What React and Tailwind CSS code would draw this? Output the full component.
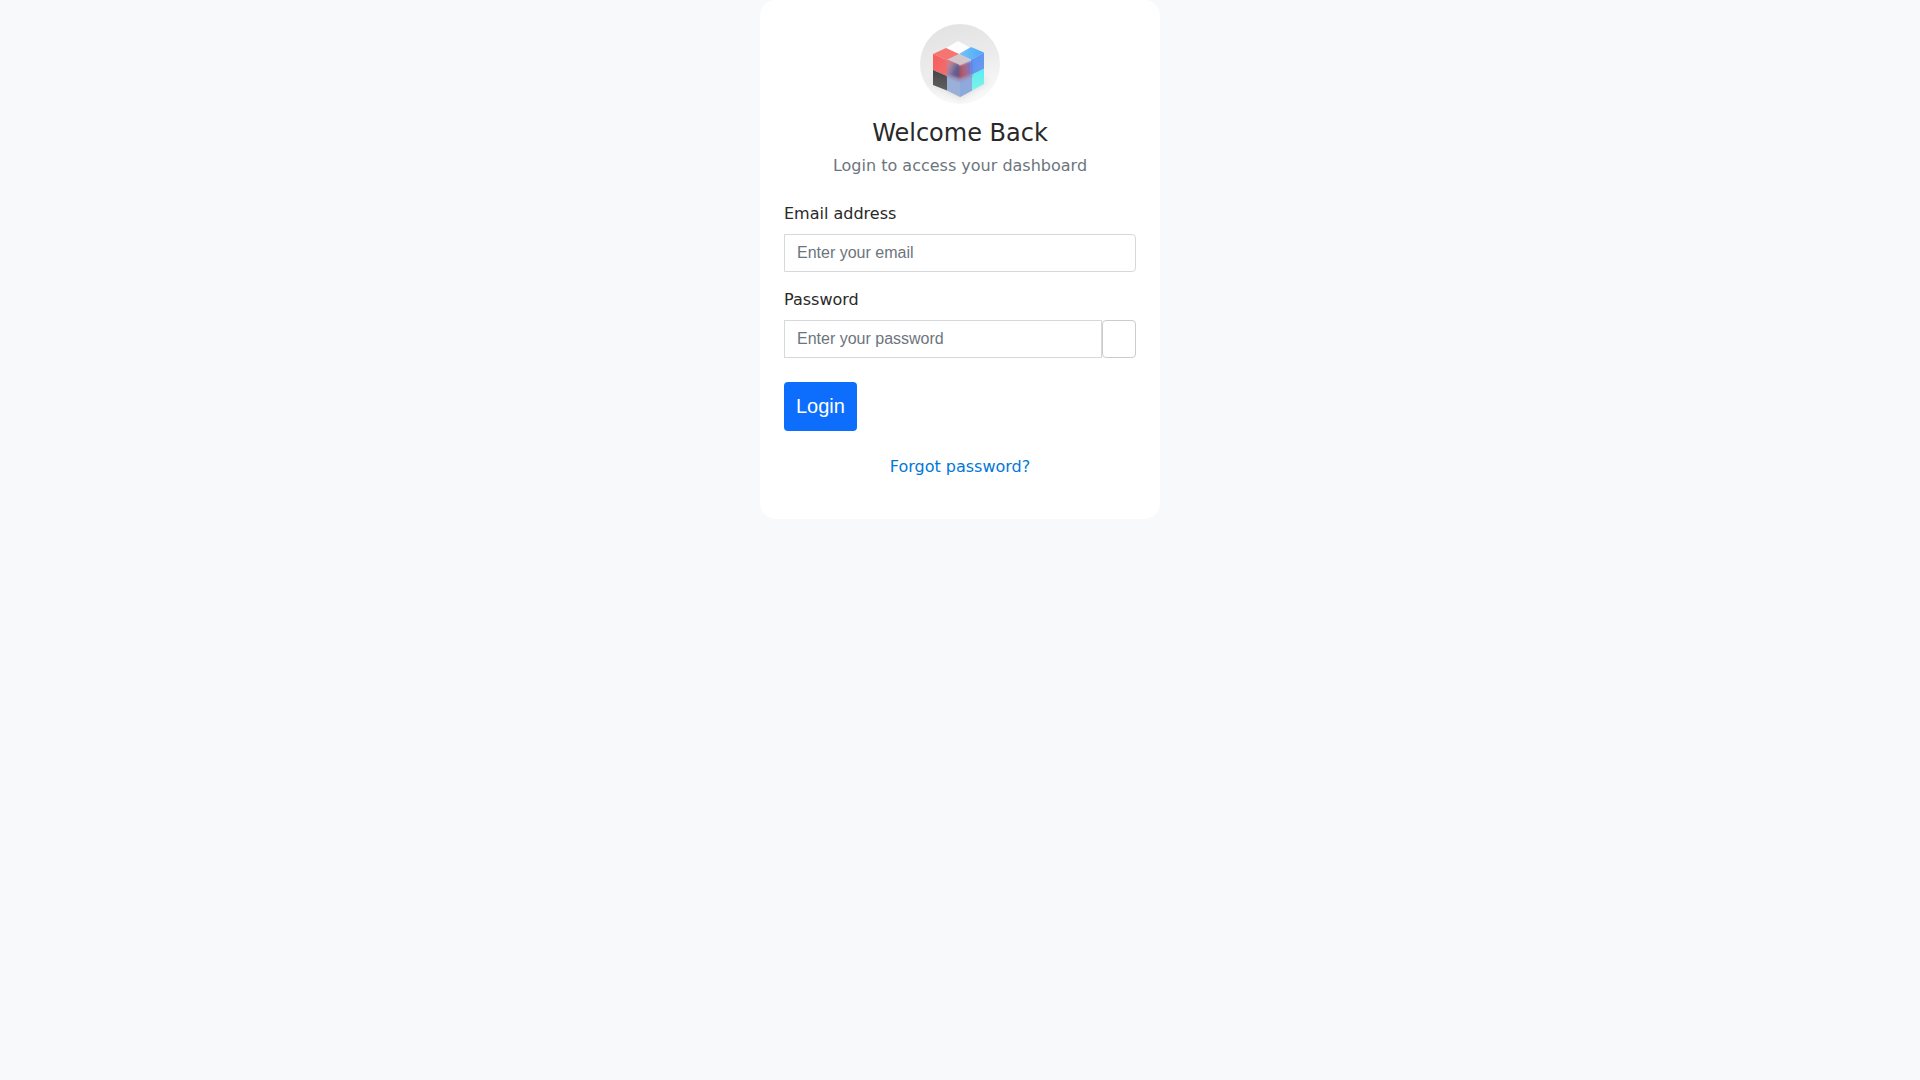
const Logo = () => (
  <svg viewBox="0 0 80 80" role="img" aria-label="Logo" className="size-20 rounded-full">
    <defs>
      <linearGradient id="backdrop" x1="0" y1="0" x2="0.3" y2="1">
        <stop offset="0" stopColor="#e1e1e1" />
        <stop offset="0.6" stopColor="#ececec" />
        <stop offset="1" stopColor="#f8f8f8" />
      </linearGradient>
      <linearGradient id="redFace" x1="0" y1="0" x2="1" y2="1">
        <stop offset="0" stopColor="#f95c5c" />
        <stop offset="1" stopColor="#f06e70" />
      </linearGradient>
      <linearGradient id="blueTop" x1="0" y1="0" x2="1" y2="0">
        <stop offset="0" stopColor="#72c4f8" />
        <stop offset="1" stopColor="#4da8fb" />
      </linearGradient>
      <linearGradient id="blueFace" x1="0" y1="0" x2="1" y2="1">
        <stop offset="0" stopColor="#5594f5" />
        <stop offset="1" stopColor="#7099ec" />
      </linearGradient>
      <linearGradient id="darkFace" x1="0" y1="0" x2="0" y2="1">
        <stop offset="0" stopColor="#464646" />
        <stop offset="1" stopColor="#606060" />
      </linearGradient>
      <linearGradient id="cyanFace" x1="0" y1="0" x2="0" y2="1">
        <stop offset="0" stopColor="#5eeaf0" />
        <stop offset="1" stopColor="#7af5ea" />
      </linearGradient>
      <linearGradient id="glassLeft" x1="0" y1="0" x2="1" y2="0.7">
        <stop offset="0" stopColor="#ea7d84" />
        <stop offset="0.35" stopColor="#a4829f" />
        <stop offset="0.7" stopColor="#5d5f94" />
        <stop offset="1" stopColor="#7d4f74" />
      </linearGradient>
      <linearGradient id="glassRight" x1="0" y1="0.6" x2="1" y2="0.4">
        <stop offset="0" stopColor="#b2525e" />
        <stop offset="0.5" stopColor="#a5698c" />
        <stop offset="1" stopColor="#5f7ddd" />
      </linearGradient>
      <filter id="shade" x="-30%" y="-30%" width="160%" height="160%">
        <feGaussianBlur stdDeviation="3" />
      </filter>
      <filter id="soft" x="-10%" y="-10%" width="120%" height="120%">
        <feGaussianBlur stdDeviation="0.3" />
      </filter>
      <filter id="frost" x="-10%" y="-10%" width="120%" height="120%">
        <feGaussianBlur stdDeviation="0.8" />
      </filter>
    </defs>
    <rect width="80" height="80" fill="url(#backdrop)" />
    <path d="M10 58 40 48 68 58 40 75Z" fill="#c9c9c9" opacity="0.6" filter="url(#shade)" />
    <g filter="url(#soft)">
      {/* back cube */}
      <path d="M26 24 38 17 51 24 39 31Z" fill="#fdfdfd" />
      {/* red cube */}
      <path d="M13 30 26 24 39 30 27 36Z" fill="#f57471" />
      <path d="M13 30 27 36V52L13 46Z" fill="url(#redFace)" />
      <path d="M27 36 39 30V48L27 52Z" fill="#ec7075" />
      {/* blue cube */}
      <path d="M39 30 51 23 64 28.500 51 36Z" fill="url(#blueTop)" />
      <path d="M51 36 64 28.500V46L51 52Z" fill="url(#blueFace)" />
      {/* bottom row */}
      <path d="M13 46 27 52V66.500L13 61Z" fill="url(#darkFace)" />
      <path d="M51 51 64 44.500V60L51 67Z" fill="url(#cyanFace)" />
      <path d="M27 50 40 56 52 50V66.500L40 73 27 66.500Z" fill="#9bb0d8" />
      <path d="M40 56 52 50V66.500L40 73Z" fill="#8ea9dc" />
    </g>
    {/* frosted cube in front */}
    <g filter="url(#frost)">
      <path d="M27 36 40 41V56.500L27 52Z" fill="url(#glassLeft)" />
      <path d="M40 41 52 36V52L40 56.500Z" fill="url(#glassRight)" />
      <path d="M27 50 40 54.500 52 50V53L40 58 27 53Z" fill="#9a93bd" />
    </g>
    <path d="M27.500 35.500 39 30 51.500 35.500 40 41Z" fill="#d3c6cb" filter="url(#soft)" />
  </svg>
);

const inputStyles =
  'block h-[38px] w-full min-w-0 flex-1 border border-[#d6d8da] bg-white px-3 font-["Liberation_Sans",sans-serif] text-base text-[#292929] placeholder:text-[#6c757d]';

const Field = ({ id, label, children }) => (
  <div>
    <label htmlFor={id} className="mb-2 block">{label}</label>
    <div className="flex">{children}</div>
  </div>
);

export default function App() {
  return (
    <div className='min-h-screen bg-[#f8f9fb] font-["DejaVu_Sans",sans-serif] text-base text-[#292929]'>
      <main className="mx-auto w-full max-w-[400px] rounded-2xl bg-white px-6 pt-6 pb-10">
        <header className="mb-6 flex flex-col items-center text-center">
          <Logo />
          <h1 className="mt-4 mb-2 text-2xl leading-[26px]">Welcome Back</h1>
          <p className="text-[#6c757d]">Login to access your dashboard</p>
        </header>

        <form onSubmit={(e) => e.preventDefault()}>
          <div className="mb-6 flex flex-col gap-4">
            <Field id="email" label="Email address">
              <input id="email" type="email" placeholder="Enter your email" className={`${inputStyles} rounded-r`} />
            </Field>
            <Field id="password" label="Password">
              <input id="password" type="password" placeholder="Enter your password" className={inputStyles} />
              <button type="button" aria-label="Show password" className="w-[34px] rounded border border-[#cccccc] bg-white" />
            </Field>
          </div>
          <button type="submit" className='rounded bg-[#0d6efd] px-3 py-2 font-["Liberation_Sans",sans-serif] text-xl leading-[33px] text-white'>
            Login
          </button>
        </form>

        <div className="mt-6 text-center">
          <a href="#" className="text-[#0078d7]">Forgot password?</a>
        </div>
      </main>
    </div>
  );
}
